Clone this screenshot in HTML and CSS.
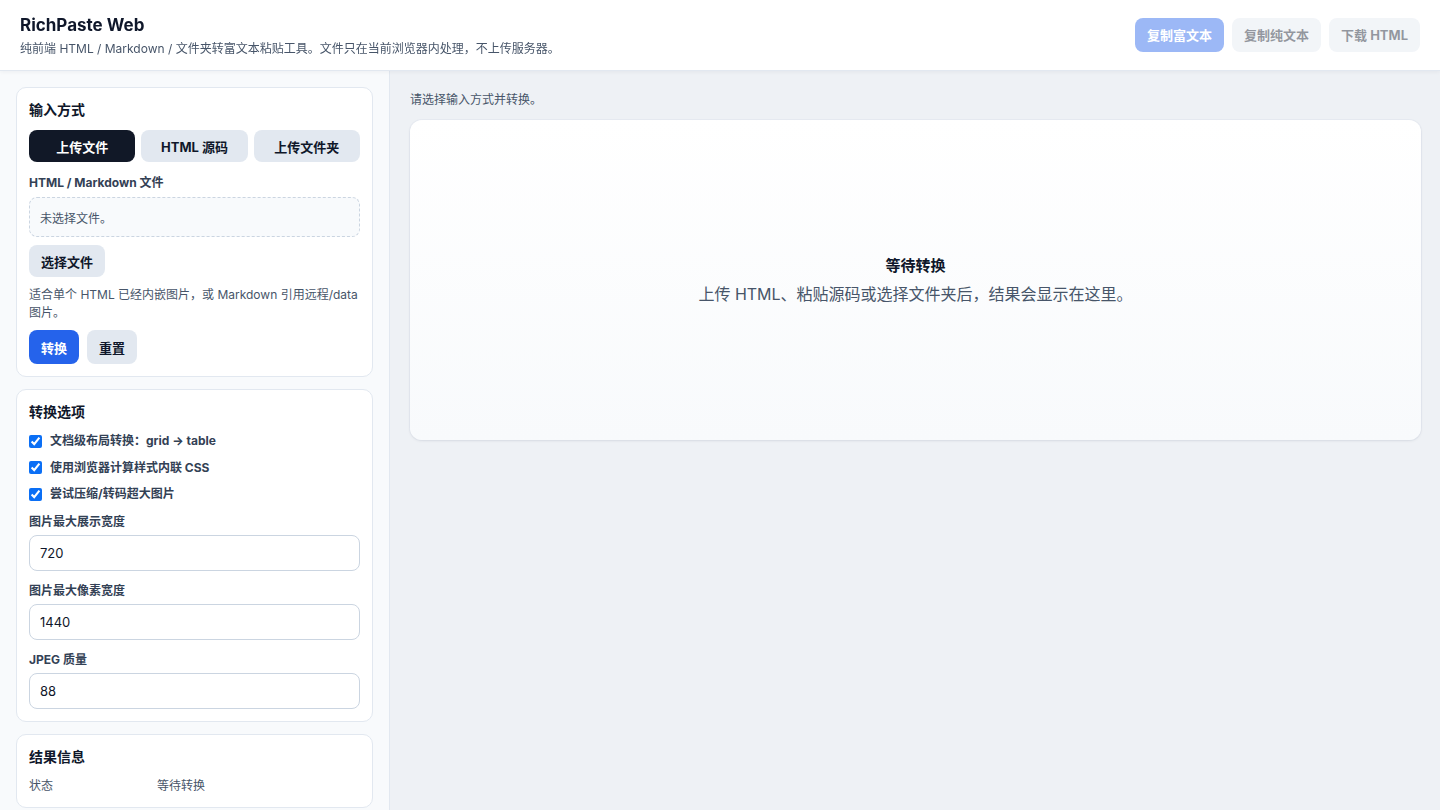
FILE: index.html
```html
<!DOCTYPE html>
<html lang="zh-CN">
<head>
    <meta charset="UTF-8">
    <meta name="viewport" content="width=device-width, initial-scale=1.0">
    <title>RichPaste Web</title>
    <link rel="stylesheet" href="styles.css">
</head>
<body>
    <header class="topbar">
        <div class="brand">
            <h1>RichPaste Web</h1>
            <p>纯前端 HTML / Markdown / 文件夹转富文本粘贴工具。文件只在当前浏览器内处理，不上传服务器。</p>
        </div>
        <div class="actions">
            <button class="btn btn-primary" disabled>复制富文本</button>
            <button class="btn btn-secondary" disabled>复制纯文本</button>
            <button class="btn btn-secondary" disabled>下载 HTML</button>
        </div>
    </header>

    <div class="layout">
        <aside class="sidebar">
            <section class="card">
                <h2>输入方式</h2>
                <div class="tabs">
                    <button class="tab active">上传文件</button>
                    <button class="tab">HTML 源码</button>
                    <button class="tab">上传文件夹</button>
                </div>
                <label class="field-label">HTML / Markdown 文件</label>
                <div class="dropzone">未选择文件。</div>
                <div><button class="btn btn-secondary">选择文件</button></div>
                <p class="hint">适合单个 HTML 已经内嵌图片，或 Markdown 引用远程/data 图片。</p>
                <div class="row">
                    <button class="btn btn-blue">转换</button>
                    <button class="btn btn-secondary">重置</button>
                </div>
            </section>

            <section class="card">
                <h2>转换选项</h2>
                <label class="check"><input type="checkbox" checked> 文档级布局转换：grid → table</label>
                <label class="check"><input type="checkbox" checked> 使用浏览器计算样式内联 CSS</label>
                <label class="check"><input type="checkbox" checked> 尝试压缩/转码超大图片</label>
                <label class="field-label" for="maxWidth">图片最大展示宽度</label>
                <input class="form-control" id="maxWidth" type="text" value="720">
                <label class="field-label" for="maxPixel">图片最大像素宽度</label>
                <input class="form-control" id="maxPixel" type="text" value="1440">
                <label class="field-label" for="quality">JPEG 质量</label>
                <input class="form-control" id="quality" type="text" value="88">
            </section>

            <section class="card">
                <h2>结果信息</h2>
                <div class="info">
                    <span>状态</span>
                    <span>等待转换</span>
                </div>
            </section>
        </aside>

        <main class="main">
            <p class="status">请选择输入方式并转换。</p>
            <div class="preview">
                <strong>等待转换</strong>
                <span>上传 HTML、粘贴源码或选择文件夹后，结果会显示在这里。</span>
            </div>
        </main>
    </div>
</body>
</html>
```

FILE: styles.css
```css
* {
    box-sizing: border-box;
}
html, body {
    height: 100%;
}
body {
    margin: 0;
    font-family: Inter, "Noto Sans CJK SC", sans-serif;
    color: #0f172a;
    background-color: #eef1f5;
    display: flex;
    flex-direction: column;
    overflow: hidden;
}
button {
    font-family: inherit;
}
.topbar {
    height: 71px;
    flex-shrink: 0;
    display: flex;
    justify-content: space-between;
    align-items: center;
    padding: 0 20px;
    background: white;
    border-bottom: 1px solid #e2e8f0;
    box-shadow: 0 1px 4px rgba(15, 23, 42, 0.05);
    position: relative;
    z-index: 1;
}
.brand h1 {
    margin: 0;
    font-size: 17px;
    line-height: 24px;
    font-weight: 700;
}
.brand p {
    margin: 3px 0 0;
    font-size: 12px;
    line-height: 18px;
    color: #475569;
}
.actions {
    display: flex;
    gap: 8px;
    margin-top: -1px;
}
.btn {
    height: 32px;
    padding: 0 12px;
    border: none;
    border-radius: 8px;
    font-size: 13px;
    font-weight: 700;
    cursor: pointer;
    color: #0f172a;
}
.actions .btn {
    height: 34px;
}
.btn:disabled {
    opacity: 0.45;
    cursor: default;
}
.btn-primary {
    background-color: #2563eb;
    color: white;
}
.btn-secondary {
    background-color: #e2e8f0;
}
.btn-blue {
    background-color: #2563eb;
    color: white;
}
.row .btn {
    height: 34px;
}
.layout {
    flex: 1;
    min-height: 0;
    display: grid;
    grid-template-columns: 390px 1fr;
}
.sidebar {
    background-color: #f8fafc;
    border-right: 1px solid #e2e8f0;
    padding: 16px;
    display: flex;
    flex-direction: column;
    gap: 12px;
    overflow-y: auto;
    scrollbar-width: none;
}
.card {
    background: white;
    border: 1px solid #e2e8f0;
    border-radius: 10px;
    padding: 12px;
    display: flex;
    flex-direction: column;
    flex-shrink: 0;
}
.card h2 {
    margin: 0 0 10px;
    font-size: 14px;
    line-height: 20px;
    font-weight: 700;
}
.tabs {
    display: grid;
    grid-template-columns: repeat(3, 1fr);
    gap: 6px;
    margin-bottom: 12px;
}
.tab {
    height: 32px;
    border: none;
    border-radius: 8px;
    background-color: #e2e8f0;
    font-size: 13px;
    font-weight: 700;
    color: #0f172a;
}
.tab.active {
    background-color: #111827;
    color: white;
}
.field-label {
    font-size: 12px;
    line-height: 18px;
    font-weight: 700;
    color: #334155;
    margin-bottom: 4px;
}
.dropzone {
    height: 40px;
    padding: 0 10px;
    display: flex;
    align-items: center;
    border: 1px dashed #cbd5e1;
    border-radius: 8px;
    background-color: #f8fafc;
    font-size: 12px;
    color: #475569;
    margin-top: 1px;
    margin-bottom: 8px;
}
.hint {
    margin: 9px 0 8px;
    font-size: 12px;
    line-height: 18px;
    color: #475569;
}
.row {
    display: flex;
    gap: 8px;
}
.check {
    display: flex;
    align-items: center;
    gap: 8px;
    font-size: 12px;
    line-height: 18px;
    font-weight: 700;
    color: #334155;
    margin-bottom: 8.5px;
}
.check input {
    margin: 0;
    width: 13px;
    height: 13px;
    accent-color: #0b6ff5;
}
.check + .field-label {
    margin-top: 1px;
}
.form-control {
    height: 36px;
    padding: 0 10px;
    border: 1px solid #cbd5e1;
    border-radius: 8px;
    font-family: inherit;
    font-size: 13px;
    color: #0f172a;
    margin-bottom: 11px;
}
.form-control:last-child {
    margin-bottom: 0;
}
.info {
    display: grid;
    grid-template-columns: 128px 1fr;
    font-size: 12px;
    line-height: 18px;
    color: #475569;
}
.main {
    padding: 20px;
    min-width: 0;
}
.status {
    margin: 0 0 11px;
    font-size: 12px;
    line-height: 18px;
    color: #475569;
}
.preview {
    height: 320px;
    margin-right: -1px;
    border-radius: 12px;
    background: linear-gradient(180deg, #ffffff 0%, #f8fafc 100%);
    box-shadow: 0 1px 3px rgba(15, 23, 42, 0.08), 0 0 0 1px rgba(226, 232, 240, 0.6);
    display: flex;
    flex-direction: column;
    align-items: center;
    justify-content: center;
    gap: 6px;
}
.preview strong {
    font-size: 15px;
    line-height: 22px;
}
.preview span {
    font-size: 16px;
    line-height: 22px;
    color: #475569;
}
```
